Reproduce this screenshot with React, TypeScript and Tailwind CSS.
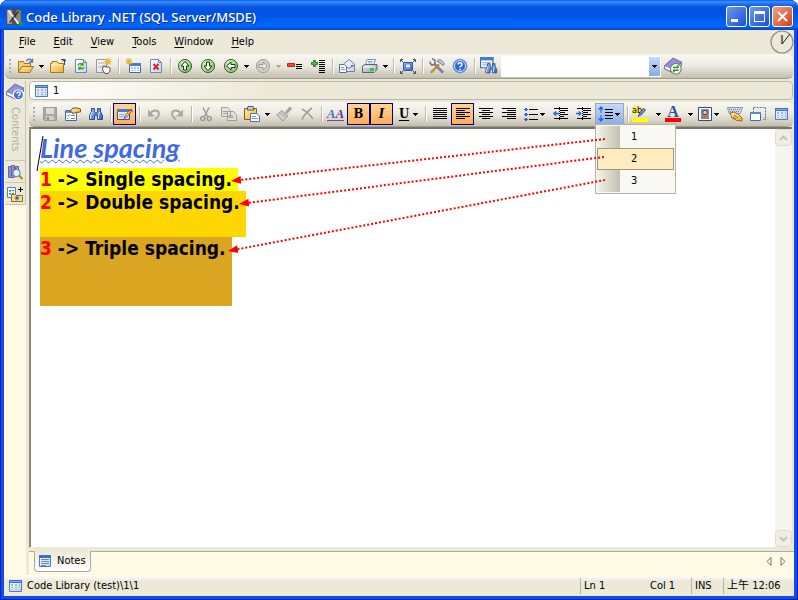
import type { ReactNode } from "react";
import { clsx } from "clsx";

const MENUS = ["File", "Edit", "View", "Tools", "Window", "Help"];

const Icon = ({ children, size = 16 }: { children: ReactNode; size?: number }) => (
  <svg width={size} height={size} viewBox="0 0 16 16" fill="none" className="shrink-0" aria-hidden="true">
    {children}
  </svg>
);

const Caret = ({ light = false }: { light?: boolean }) => (
  <svg width="5" height="3" viewBox="0 0 5 3" shapeRendering="crispEdges" className="shrink-0" aria-hidden="true">
    <path d="M0 0h5v1H0zM1 1h3v1H1zM2 2h1v1H2z" fill={light ? "#aca899" : "#000"} />
  </svg>
);

const Grip = () => (
  <div className="flex w-[9px] shrink-0 flex-col items-center justify-center gap-0.5 pl-px">
    {[0, 1, 2, 3].map((i) => (
      <span key={i} className="h-0.5 w-0.5 bg-[#b3b09e]" />
    ))}
  </div>
);

const Separator = () => (
  <div className="flex w-1.5 shrink-0 items-center pl-[3px]">
    <span className="h-4 w-0.5 border-r border-white bg-[#bdb9a5]" />
  </div>
);

const ToolButton = ({ label, active, children }: { label: string; active?: boolean; children: ReactNode }) => (
  <button
    aria-label={label}
    title={label}
    className={clsx(
      "flex h-[22px] w-[23px] shrink-0 items-center justify-center",
      active && "border border-[#000080] bg-linear-to-b from-[#ffd593] to-[#ffac56]"
    )}
  >
    {children}
  </button>
);

const DropArrow = ({ label, light }: { label: string; light?: boolean }) => (
  <button aria-label={label} className="flex h-[22px] w-[9px] shrink-0 items-center justify-center">
    <Caret light={light} />
  </button>
);

const DropButton = ({ label, wide, open, children }: { label: string; wide?: boolean; open?: boolean; children: ReactNode }) => (
  <button
    aria-label={label}
    title={label}
    className={clsx(
      "flex h-[22px] shrink-0 items-center",
      wide ? "w-8 gap-1.5 pl-0.5" : "w-[29px] gap-px pl-[3px]",
      open && "bg-linear-to-b from-[#c9dbf8] to-[#86ace6] outline -outline-offset-1 outline-[#9ba7b8]"
    )}
  >
    {children}
    <Caret />
  </button>
);

/* ---------- icons ---------- */

// gradients shared by the icons
const Gradients = () => (
  <svg width="0" height="0" className="absolute" aria-hidden="true">
    <defs>
      <linearGradient id="gold" x1="0" y1="0" x2="1" y2="1">
        <stop offset="0" stopColor="#fff0b4" />
        <stop offset="1" stopColor="#e9ae37" />
      </linearGradient>
      <linearGradient id="blue" x1="0" y1="0" x2="1" y2="1">
        <stop offset="0" stopColor="#9dc0f5" />
        <stop offset="1" stopColor="#2f5fb8" />
      </linearGradient>
      <linearGradient id="paper" x1="0" y1="0" x2="1" y2="1">
        <stop offset="0" stopColor="#ffffff" />
        <stop offset="1" stopColor="#bfd3f3" />
      </linearGradient>
      <linearGradient id="green" x1="0" y1="0" x2="1" y2="1">
        <stop offset="0" stopColor="#e4f6d8" />
        <stop offset="1" stopColor="#7ebd5c" />
      </linearGradient>
      <linearGradient id="steel" x1="0" y1="0" x2="1" y2="1">
        <stop offset="0" stopColor="#eef0f5" />
        <stop offset="1" stopColor="#8f97a8" />
      </linearGradient>
    </defs>
  </svg>
);

const Table = () => (
  <Icon>
    <path d="M2.500 2.500h12v11h-12z" fill="url(#paper)" stroke="#5479bd" />
    <path d="M2 2h13v3H2z" fill="#3f6fcb" />
    <path d="M3 3h11v1H3z" fill="#7da8f0" />
    <path d="M4 6h2v2H4zM8 6h2v2H8zM12 6h1v2h-1zM4 9h2v1H4zM8 9h2v1H8zM12 9h1v1h-1zM4 11h2v1H4zM8 11h2v1H8zM12 11h1v1h-1z" fill="#9cb9ea" />
  </Icon>
);

const Notes = () => (
  <Icon>
    <path d="M2.500 2.500h11v11h-11z" fill="url(#paper)" stroke="#5479bd" />
    <path d="M2 2h12v3H2z" fill="#3f6fcb" />
    <path d="M4 6.500h8M4 8.500h8M4 10.500h8M4 12.500h5" stroke="#6d87b8" />
  </Icon>
);

const OpenFolder = () => (
  <Icon>
    <path d="M.5 14.500v-11h5l1 2h6v3" fill="#f4d06c" stroke="#a07822" />
    <path d="M.5 14.500 4 8.500h11.500l-3.500 6z" fill="url(#gold)" stroke="#a07822" />
    <path d="M8.500 3.500c1-3 4-3 5.500-.5M14.500.5V4H11" stroke="#56749f" strokeWidth="1.300" />
  </Icon>
);

const UpFolder = () => (
  <Icon>
    <path d="M.5 14.500v-9h1.500v-2h5l1.500 2h5v9z" fill="url(#gold)" stroke="#a07822" />
    <path d="M1.500 7h11" stroke="#fff2bd" />
    <path d="M14.500 7V2M12.500 3.500l2-2.500 1.500 2.500M11 1.500h3" stroke="#35475f" />
  </Icon>
);

const Refresh = () => (
  <Icon>
    <path d="M2.500 1.500h8l3 3v10h-11z" fill="url(#paper)" stroke="#6f88ad" />
    <path d="M10.500 1.500v3h3" stroke="#6f88ad" />
    <path d="M5 7.500c.500-2 3-2.500 4.500-1M10 4.500v2.500H7.500M11 9c-.5 2-3 2.500-4.500 1M6 12V9.500h2.500" stroke="#3f9a16" strokeWidth="1.300" />
  </Icon>
);

const Spark = () => (
  <path d="M12 0v7M8.500 3.500h7M9.500 1l5 5M14.500 1l-5 5" stroke="#e9b823" strokeWidth="1.200" />
);

const NewPage = () => (
  <Icon>
    <path d="M.5 1.500h10v13H.5z" fill="url(#paper)" stroke="#8799b5" />
    <path d="M2 4h7v2H2zM2 8h5v2H2z" fill="#e6cda5" />
    <Spark />
    <path d="M7 10v-2h2v1h4l1 1v3l-2 2.500H9L6.500 12z" fill="#fff" stroke="#555" />
  </Icon>
);

const NewTable = () => (
  <Icon>
    <path d="M4.500 5.500h11v9h-11z" fill="#fff" stroke="#4668ad" />
    <path d="M4 5h12v3H4z" fill="#487ad0" />
    <path d="M6 9h2v2H6zM9 9h2v2H9zM12 9h2v2h-2zM6 12h2v1H6zM9 12h2v1H9zM12 12h2v1h-2z" fill="#aac3e8" />
    <path d="M4 0v7M.5 3.500h7M1.500 1l5 5M6.500 1l-5 5" stroke="#e9b823" strokeWidth="1.200" />
  </Icon>
);

const DeletePage = () => (
  <Icon>
    <path d="M2.500 1.500h8l3 3v10h-11z" fill="url(#paper)" stroke="#6f88ad" />
    <path d="M10.500 1.500v3h3" stroke="#6f88ad" />
    <path d="m5.500 6 5 5.500M10.500 6l-5 5.500" stroke="#df2318" strokeWidth="2" />
  </Icon>
);

const CircleArrow = ({ turn, grey }: { turn: 0 | 90 | 180 | 270; grey?: boolean }) => (
  <Icon>
    <circle cx="8" cy="8" r="6.500" fill={grey ? "#d4d2ca" : "url(#green)"} stroke={grey ? "#9b9b94" : "#27591d"} />
    <path
      d="M8 3.500 12 8H9.500v4h-3V8H4z"
      fill={grey ? "#e8e6de" : "#fff"}
      stroke={grey ? "#9b9b94" : "#1a3a13"}
      transform={`rotate(${turn} 8 8)`}
    />
  </Icon>
);

const Minus = () => (
  <Icon>
    <path d="M.5 5.500h7v3h-7z" fill="#ef4b2c" stroke="#b02c14" />
    <path d="M9 6.500h6M9 8.500h6M9 10.500h6" stroke="#000" shapeRendering="crispEdges" />
  </Icon>
);

const Plus = () => (
  <Icon>
    <path d="M3.500 2.500h2v2h2v2h-2v2h-2v-2h-2v-2h2z" fill="#64b154" stroke="#2c7a25" />
    <path d="M9 2.500h6M9 4.500h6M9 6.500h6M9 8.500h6M9 10.500h6M9 12.500h6M9 14.500h6" stroke="#000" shapeRendering="crispEdges" />
  </Icon>
);

const Mail = () => (
  <Icon>
    <path d="M4.500 6 10 1.500 15.500 6v7.500h-11z" fill="url(#paper)" stroke="#6983ad" />
    <path d="M5 7l5 3.500L15 7" stroke="#6983ad" />
    <path d="M12 7h2v2h-2z" fill="#e0522a" />
    <path d="M.5 6.500h5l2 2v6h-7z" fill="#fff" stroke="#597196" />
    <path d="M2 9.500h3M2 11.500h4" stroke="#7690ba" />
  </Icon>
);

const Printer = () => (
  <Icon>
    <path d="M5 1.500h8.500L11.500 7H3.500z" fill="#fff" stroke="#7c91b6" />
    <path d="M6 3.500h5M5.500 5h5" stroke="#92a7cc" />
    <path d="M.5 8 3 6.500h12v5l-3 3H.5z" fill="url(#steel)" stroke="#59647b" />
    <path d="M1 9h11v5" stroke="#eef2fa" />
    <path d="M8 10h4v3H8z" fill="#37c72a" />
  </Icon>
);

const FullScreen = () => (
  <Icon>
    <path d="M3.500 4.500h9v8h-9z" fill="url(#blue)" stroke="#2e5ba8" />
    <path d="M5.500 6h5v4h-5z" fill="#e4effd" stroke="#5582c8" />
    <path d="M.5 4V1.500H3M13 1.500h2.500V4M.5 13v2.500H3M13 15.500h2.500V13M1 2l2 2M15 2l-2 2M1 15l2-2M15 15l-2-2" stroke="#465468" />
  </Icon>
);

const Wrench = () => (
  <Icon>
    <path d="M5 5.500l9 9" stroke="#4b5260" strokeWidth="2.400" />
    <path d="M5 5.500l9 9" stroke="#c1c9d5" />
    <path d="M1 3.500c0 3 2 4 4.500 3M3 1c3 0 3.500 2 3 4" stroke="#6b7482" strokeWidth="1.500" />
    <path d="m2 14.500 8-8" stroke="#a06a1a" strokeWidth="2.200" />
    <path d="m2 14.500 8-8" stroke="#efb64a" />
    <path d="M8 3c2-2 4-1.500 5 0l2.500 3-1.500 1.500-3-2.500z" fill="#cbd2dc" stroke="#6b7482" />
  </Icon>
);

const Help = () => (
  <Icon>
    <circle cx="8" cy="8" r="6.800" fill="#2e68ce" stroke="#5c8fe2" />
    <circle cx="8" cy="8" r="5.500" stroke="#dce8fc" />
    <path d="M6 6.500c0-2.500 4-2.500 4 0C10 8 8 7.700 8 9.500M8 10.800v1.400" stroke="#fff" strokeWidth="1.500" />
  </Icon>
);

const Binoculars = () => (
  <>
    <path d="M3.500 2.500h3v3l1 1v1h1v-1l1-1v-3h3v3l2 4v4h-5v-4h-3v4h-5v-4l2-4z" fill="url(#blue)" stroke="#2a4c8f" />
    <path d="M4 6 2.500 10v3M11.500 6 10.500 10v3" stroke="#e2efff" />
  </>
);

const FindTable = () => (
  <Icon size={18}>
    <path d="M.5.5h11v9H.5z" fill="#f4f8ff" stroke="#4668ad" />
    <path d="M0 0h12v3H0z" fill="#487ad0" />
    <path d="M2 5h8M2 7h8" stroke="#9eb9e4" />
    <g transform="translate(4 4) scale(.75)">
      <Binoculars />
    </g>
  </Icon>
);

const Book = () => (
  <>
    <path d="M.5 8 8 1l7.500 3.500-6.500 7z" fill="#9a90d6" stroke="#7a6fbb" />
    <path d="M.5 8v2.500L9 14.500v-3M9 11.500 15.500 5v3" fill="#fff" stroke="#8277bb" />
  </>
);

const SyncBook = () => (
  <Icon size={18}>
    <Book />
    <circle cx="10.500" cy="10.500" r="4.800" fill="#f3faec" stroke="#6d836d" />
    <path d="M8 9.300h5M11.500 7.500l1.500 1.800M13 11.800H8M9.500 13.500 8 11.800" stroke="#44911f" strokeWidth="1.300" />
  </Icon>
);

const HelpBook = () => (
  <Icon size={18}>
    <Book />
    <circle cx="11" cy="10.500" r="4.500" fill="#4375d2" stroke="#fff" />
    <path d="M9.700 9.500c0-2 3-2 3 0 0 1.200-1.500 1-1.500 2M11.200 12.200v1" stroke="#fff" strokeWidth="1.200" />
  </Icon>
);

const SearchBooks = () => (
  <Icon>
    <path d="M1.500 2.500h3v11h-3zM4.500 1.500h3v12h-3z" fill="#9a90cf" stroke="#6a60a5" />
    <path d="M8.500 2.500h3v5h-3z" fill="#7fa6da" stroke="#4b6ca5" />
    <path d="M12 11.500l3.500 3.500" stroke="#bd8519" strokeWidth="2" />
    <circle cx="9.500" cy="9" r="3.700" fill="#e2f3ff" stroke="#5b6f91" />
  </Icon>
);

const AddFavourite = () => (
  <Icon>
    <path d="M.5 1.500h8v10h-8z" fill="#f3f8ff" stroke="#5e7eae" />
    <path d="M2 4h2v1.500H2zM2 7h2v1.500H2z" fill="#409936" />
    <path d="M5 4.500h2M5 7.500h2" stroke="#6075a0" />
    <path d="M11 3.500h5M13.500 1v5" stroke="#000" />
    <path d="M4.500 8.500h4l1 1h6v6h-11z" fill="#fbe18c" stroke="#8c7025" />
    <path d="M10 9.500v5M7.500 12h5M8.500 10.500l3 3M11.500 10.500l-3 3" stroke="#274e9a" strokeWidth=".8" />
  </Icon>
);

const Save = () => (
  <Icon>
    <path d="M1.500 1.500h13v13h-12l-1-1z" fill="#a9a9a4" stroke="#9a9a94" />
    <path d="M4 2h8v6H4z" fill="#dddcd6" />
    <path d="M4 10h8v4H4z" fill="#cfcec8" />
    <path d="M5 11h2v3H5z" fill="#8d8d88" />
  </Icon>
);

const Properties = () => (
  <Icon>
    <path d="M.5 4.500h11v10H.5z" fill="#fff" stroke="#4668ad" />
    <path d="M1 5h10v2H1z" fill="#6d98df" />
    <path d="M2 9.500l1 1 1.500-2M6 9.500h4M2 12.500h1.500M6 12.500h4" stroke="#6680ae" />
    <path d="M4.500 5.500 8 2h4l3.500 1v3l-5 .5L8 8 7 6z" fill="url(#gold)" stroke="#79571c" />
  </Icon>
);

const EditPencil = () => (
  <Icon>
    <path d="M.5 3.500h12v10H.5z" fill="url(#paper)" stroke="#35599c" />
    <path d="M0 3h13v3H0z" fill="#477bd1" />
    <path d="M2 8.500h5M2 10.500h4" stroke="#8ea8d3" />
    <path d="M7 12.500 8 9.500l6-6.500 1.500 1.500-6 6.500z" fill="#f5cb68" stroke="#644a21" strokeWidth=".8" />
    <path d="m13 3.500 2 2" stroke="#c84732" strokeWidth="1.500" />
  </Icon>
);

const Undo = ({ flip }: { flip?: boolean }) => (
  <Icon>
    <g transform={flip ? "translate(16 0) scale(-1 1)" : undefined}>
      <path d="M4 7.500c3-4 9-4 9 .5 0 2.500-2 3.500-4 5.500" stroke="#aaa9a1" strokeWidth="2" />
      <path d="M2 3.500v7h7z" fill="#aaa9a1" />
    </g>
  </Icon>
);

const Cut = () => (
  <Icon>
    <path d="M5 1.500l4.500 9M11 1.500l-4.500 9" stroke="#9b9b96" strokeWidth="1.500" />
    <circle cx="4.800" cy="12.500" r="2" stroke="#9b9b96" strokeWidth="1.500" />
    <circle cx="11.200" cy="12.500" r="2" stroke="#9b9b96" strokeWidth="1.500" />
  </Icon>
);

const Copy = () => (
  <Icon>
    <path d="M.5 1.500h6l3 3v6h-9zM6.500 5.500h6l3 3v6h-9z" fill="#e2e0d7" stroke="#a2a199" />
    <path d="M2 5.500h4M2 7.500h4M8 9.500h4M8 11.500h5" stroke="#a2a199" />
  </Icon>
);

const Paste = () => (
  <Icon>
    <path d="M.5 2.500h12v11H.5z" fill="url(#gold)" stroke="#8c5e12" />
    <path d="M4 .5h5l1 3.500H3z" fill="#cdd2db" stroke="#53565e" />
    <path d="M6.500 7.500h6l3 2.500v5.500h-9z" fill="#fff" stroke="#5271a4" />
    <path d="M8 10.500h4M8 12.500h6" stroke="#7f9bcb" />
  </Icon>
);

const Brush = () => (
  <Icon>
    <path d="M15 1.500 10 7" stroke="#a3a29b" strokeWidth="3" />
    <path d="M6 4.500 12 10l-5 5-6.500-6z" fill="#c3c1b8" stroke="#a3a29b" />
    <path d="m3 8.500 5 4.500" stroke="#efede6" />
  </Icon>
);

const Cross = () => (
  <Icon>
    <path d="M3 3c4 2 8 6 11 10M13 2C9 5 5 9 3 13.500" stroke="#a19f96" strokeWidth="1.600" />
  </Icon>
);

const Glyphs = () => (
  <span className="flex items-baseline border-b border-[#7b3fb5] font-['Liberation_Serif',serif] text-[13px] leading-[13px] font-bold italic">
    <span className="text-[#3e71ca]">A</span>
    <span className="text-[#6833a4]">A</span>
  </span>
);

const Lines = ({ kind }: { kind: "justify" | "left" | "center" | "right" }) => {
  const d = {
    justify: "M1 2.500h14M1 4.500h14M1 6.500h14M1 8.500h14M1 10.500h14M1 12.500h14",
    left: "M1 2.500h14M1 4.500h9M1 6.500h14M1 8.500h9M1 10.500h14M1 12.500h9",
    center: "M1 2.500h14M4 4.500h8M1 6.500h14M4 8.500h8M1 10.500h14M4 12.500h8",
    right: "M1 2.500h14M6 4.500h9M1 6.500h14M6 8.500h9M1 10.500h14M6 12.500h9",
  }[kind];
  return (
    <Icon>
      <path d={d} stroke="#000" shapeRendering="crispEdges" />
    </Icon>
  );
};

const Bullets = () => (
  <Icon>
    <path d="M6 3.500h9M6 8.500h9M6 13.500h9" stroke="#000" shapeRendering="crispEdges" />
    <path d="M2 2h2v3H2zM2 7h2v3H2zM2 12h2v3H2zM1 3h4v1H1zM1 8h4v1H1zM1 13h4v1H1z" fill="#3f66bd" />
  </Icon>
);

const Indent = ({ out }: { out?: boolean }) => (
  <Icon>
    <path d="M1 2.500h14M7 4.500h8M7 6.500h5M7 8.500h8M7 10.500h4M1 12.500h14" stroke="#000" shapeRendering="crispEdges" />
    <path d="M6.500 1v14" stroke="#000" strokeDasharray="1 1" />
    <path d={out ? "M0 7.500 3 5v2h3v1H3v2z" : "M5.500 7.500 3 5v2H0v1h3v2z"} fill="#2966d4" stroke="#2966d4" strokeWidth=".5" />
  </Icon>
);

const Spacing = () => (
  <Icon>
    <path d="M7 3.500h8M7 6.500h8M7 9.500h8M7 12.500h8" stroke="#000" shapeRendering="crispEdges" />
    <path d="M3 0 6 3.500H3.500V7h-1V3.500H0zM3 16l3-3.500H3.500V9h-1v3.500H0z" fill="#2563d0" />
  </Icon>
);

const Highlight = () => (
  <span className="flex w-[18px] flex-col">
    <span className="flex h-3 items-start">
      <span className="bg-[#fff36b] font-['DejaVu_Sans_Condensed',sans-serif] text-[9px] leading-[9px] text-black">ab</span>
      <svg width="8" height="12" viewBox="0 0 9 12" className="-ml-1 shrink-0" aria-hidden="true">
        <path d="M0 11 2 7l4-5 2.500 1.500L4 9z" fill="url(#blue)" stroke="#365488" />
      </svg>
    </span>
    <span className="h-1 w-4 bg-[#ffff00]" />
  </span>
);

const FontColour = () => (
  <span className="flex w-[18px] flex-col items-center">
    <span className="font-['Liberation_Serif',serif] text-[16px] leading-3 font-bold text-[#2e53a4]">A</span>
    <span className="h-1 w-4 bg-[#ff0000]" />
  </span>
);

const Portrait = () => (
  <Icon>
    <path d="M1.500 1.500h13v13h-13z" fill="#fff" stroke="#2c4c8b" />
    <path d="M4 3h8v10H4z" fill="#7692c1" />
    <circle cx="8" cy="6.500" r="2.300" fill="#f2c29c" stroke="#603d25" />
    <path d="M4 13c0-4 8-4 8 0z" fill="#d36a36" />
  </Icon>
);

const Keyboard = () => (
  <Icon>
    <path d="M.5 1.500h15l-2 6H2z" fill="#d5dbe7" stroke="#8d98ae" />
    <path d="M2 3.500h12M3 5.500h10" stroke="#6c7a94" strokeDasharray="1 1" />
    <path d="M3 7l4-1 4 2 4 4v3l-5-.5L5 12z" fill="url(#gold)" stroke="#956925" />
    <path d="M7 9l4 3M6 11l3 2" stroke="#956925" />
  </Icon>
);

const SelectArea = () => (
  <Icon>
    <path d="M3.500 1.500h12v12h-3" stroke="#5779b6" strokeDasharray="2 1" />
    <path d="M3.500 2v4" stroke="#5779b6" strokeDasharray="2 1" />
    <path d="M.5 6.500h10v8H.5z" fill="#fff" stroke="#4668ad" />
    <path d="M0 6h11v2H0z" fill="#5b8bda" />
  </Icon>
);

/* ---------- window parts ---------- */

const AppLogo = () => (
  <Icon size={18}>
    <path d="M1 1h14v14H1z" fill="#4f504e" />
    <path d="M2 2h4v12H2z" fill="#b4b6b2" />
    <path d="M10 2h4v12h-4z" fill="#868883" />
    <path d="m3 2 9 12" stroke="#eceeea" strokeWidth="1.800" />
    <path d="M12 3 4 13" stroke="#2a2b29" strokeWidth="1.200" />
    <circle cx="14" cy="14" r="1.800" fill="#14a521" />
  </Icon>
);

const TitleBar = () => (
  <header className="flex h-[30px] shrink-0 items-center bg-[linear-gradient(#0058ee_0%,#3f92ff_6%,#2474ef_12%,#0352dd_25%,#0054e2_50%,#0062f8_75%,#0066ff_88%,#0046c8_100%)] px-[5px] pt-[3px]">
    <AppLogo />
    <h1 className="ml-[3px] flex-1 font-['Noto_Sans','Open_Sans',sans-serif] text-[13px] font-medium text-white [text-shadow:1px_1px_#0b2f8f]">
      Code Library .NET (SQL Server/MSDE)
    </h1>
    <div className="flex gap-0.5">
      <button aria-label="Minimize" className="flex h-[21px] w-[21px] items-center justify-center rounded-[3px] border border-white bg-linear-to-br from-[#6d96ee] to-[#1b4fd0]">
        <svg width="13" height="13" aria-hidden="true"><path d="M1 9h7v3H1z" fill="#fff" /></svg>
      </button>
      <button aria-label="Maximize" className="flex h-[21px] w-[21px] items-center justify-center rounded-[3px] border border-white bg-linear-to-br from-[#6d96ee] to-[#1b4fd0]">
        <svg width="13" height="13" aria-hidden="true"><path d="M1 1h11v11H1zM2 4v7h9V4z" fill="#fff" fillRule="evenodd" /></svg>
      </button>
      <button aria-label="Close" className="flex h-[21px] w-[21px] items-center justify-center rounded-[3px] border border-white bg-linear-to-br from-[#f0a084] to-[#d03a10]">
        <svg width="13" height="13" aria-hidden="true"><path d="m2 2 9 9M11 2l-9 9" stroke="#fff" strokeWidth="2" /></svg>
      </button>
    </div>
  </header>
);

const MenuBar = () => (
  <nav className="flex h-6 shrink-0 items-center pl-[9px]">
    {MENUS.map((name) => (
      <button key={name} className="mr-1.5 h-5 px-1.5">
        <span className="underline underline-offset-2">{name[0]}</span>
        {name.slice(1)}
      </button>
    ))}
    <svg width="24" height="24" viewBox="0 0 24 24" fill="none" className="ml-auto shrink-0" aria-hidden="true">
      <circle cx="12" cy="12" r="11" stroke="#8f8e86" strokeWidth="1.200" />
      <path d="M12 14V5" stroke="#77766f" strokeWidth="2.200" />
      <path d="m12 14 8-10" stroke="#222" />
    </svg>
  </nav>
);

const BAR = "flex shrink-0 items-center rounded-md bg-linear-to-b from-[#f8f7f2] via-[#ebe9df] to-[#c3c0b0] border-b border-[#a09d8c]";

const MainToolbar = () => (
  <div role="toolbar" aria-label="Main" className={clsx(BAR, "mx-px h-[25px]")}>
    <Grip />
    <ToolButton label="Open"><OpenFolder /></ToolButton>
    <DropArrow label="Open options" />
    <ToolButton label="Parent folder"><UpFolder /></ToolButton>
    <ToolButton label="Refresh"><Refresh /></ToolButton>
    <ToolButton label="New page"><NewPage /></ToolButton>
    <Separator />
    <ToolButton label="New table"><NewTable /></ToolButton>
    <ToolButton label="Delete"><DeletePage /></ToolButton>
    <Separator />
    <ToolButton label="Up"><CircleArrow turn={0} /></ToolButton>
    <ToolButton label="Down"><CircleArrow turn={180} /></ToolButton>
    <ToolButton label="Back"><CircleArrow turn={270} /></ToolButton>
    <DropArrow label="Back history" />
    <ToolButton label="Forward"><CircleArrow turn={90} grey /></ToolButton>
    <DropArrow label="Forward history" light />
    <ToolButton label="Collapse"><Minus /></ToolButton>
    <ToolButton label="Expand"><Plus /></ToolButton>
    <Separator />
    <ToolButton label="Send"><Mail /></ToolButton>
    <ToolButton label="Print"><Printer /></ToolButton>
    <DropArrow label="Print options" />
    <Separator />
    <ToolButton label="Full screen"><FullScreen /></ToolButton>
    <Separator />
    <ToolButton label="Options"><Wrench /></ToolButton>
    <ToolButton label="Help topics"><Help /></ToolButton>
    <Separator />
    <ToolButton label="Find in library"><FindTable /></ToolButton>
    <div className="ml-px grid w-40 shrink-0 grid-cols-[1fr_11px] bg-white p-px">
      <select aria-label="Search text" className="col-span-2 col-start-1 row-start-1 h-[19px] appearance-none bg-transparent" />
      <span className="pointer-events-none col-start-2 row-start-1 flex items-center justify-center bg-linear-to-b from-[#c9dbf8] to-[#86ace6]">
        <Caret />
      </span>
    </div>
    <ToolButton label="Sync contents"><SyncBook /></ToolButton>
  </div>
);

const SpacingMenu = () => (
  <div className="relative shrink-0">
    <DropButton label="Line spacing" open><Spacing /></DropButton>
    <ul role="menu" className="absolute top-[21px] left-0 z-10 w-[81px] border border-[#b5b2a2] bg-[#f9f8f2] p-px">
      {["1", "2", "3"].map((n) => (
        <li key={n} role="none" className="flex h-[22px]">
          <button
            role="menuitem"
            className={clsx(
              "flex w-full items-center",
              n === "2" ? "border border-[#9c9786] bg-[#ffecbf] pl-[33px]" : "bg-[linear-gradient(to_right,#f4f2e9,#c4c0b0_23px,#f9f8f2_23px)] pl-[34px]"
            )}
          >
            {n}
          </button>
        </li>
      ))}
    </ul>
  </div>
);

const SERIF = "font-['DejaVu_Serif_Condensed','DejaVu_Serif',serif] text-[13px] leading-4 font-bold text-black w-4 text-center";

const FormatToolbar = () => (
  <div role="toolbar" aria-label="Formatting" className={clsx(BAR, "h-[25px]")}>
    <Grip />
    <ToolButton label="Save"><Save /></ToolButton>
    <ToolButton label="Properties"><Properties /></ToolButton>
    <ToolButton label="Find"><Icon><Binoculars /></Icon></ToolButton>
    <Separator />
    <ToolButton label="Edit" active><EditPencil /></ToolButton>
    <Separator />
    <ToolButton label="Undo"><Undo /></ToolButton>
    <ToolButton label="Redo"><Undo flip /></ToolButton>
    <Separator />
    <ToolButton label="Cut"><Cut /></ToolButton>
    <ToolButton label="Copy"><Copy /></ToolButton>
    <ToolButton label="Paste"><Paste /></ToolButton>
    <DropArrow label="Paste options" />
    <ToolButton label="Format painter"><Brush /></ToolButton>
    <ToolButton label="Remove"><Cross /></ToolButton>
    <Separator />
    <ToolButton label="Font"><Glyphs /></ToolButton>
    <ToolButton label="Bold" active><span className={SERIF}>B</span></ToolButton>
    <ToolButton label="Italic" active><span className={clsx(SERIF, "italic")}>I</span></ToolButton>
    <DropButton label="Underline"><span className={clsx(SERIF, "underline underline-offset-2")}>U</span></DropButton>
    <Separator />
    <ToolButton label="Justify"><Lines kind="justify" /></ToolButton>
    <ToolButton label="Align left" active><Lines kind="left" /></ToolButton>
    <ToolButton label="Center"><Lines kind="center" /></ToolButton>
    <ToolButton label="Align right"><Lines kind="right" /></ToolButton>
    <DropButton label="Bullets"><Bullets /></DropButton>
    <ToolButton label="Outdent"><Indent out /></ToolButton>
    <ToolButton label="Indent"><Indent /></ToolButton>
    <SpacingMenu />
    <Separator />
    <DropButton label="Highlight" wide><Highlight /></DropButton>
    <DropButton label="Font colour" wide><FontColour /></DropButton>
    <DropButton label="Picture"><Portrait /></DropButton>
    <ToolButton label="Keyboard"><Keyboard /></ToolButton>
    <ToolButton label="Select area"><SelectArea /></ToolButton>
    <ToolButton label="Table"><Table /></ToolButton>
  </div>
);

const Sidebar = () => (
  <aside className="flex w-[22px] shrink-0 flex-col bg-[#fefae4] pl-px">
    <div className="flex flex-col border-r border-[#c9c6b4] bg-[#ece9d8]">
      <button className="flex h-20 flex-col items-center gap-1.5 border-b border-[#c9c6b4] pt-0.5">
        <HelpBook />
        <span className="text-[#b0ad9e] [writing-mode:vertical-rl]">Contents</span>
      </button>
      <button aria-label="Search" className="flex h-[22px] items-center justify-center border-b border-[#c9c6b4]">
        <SearchBooks />
      </button>
      <button aria-label="Favourites" className="flex h-[22px] items-center justify-center border-b border-[#c9c6b4]">
        <AddFavourite />
      </button>
    </div>
  </aside>
);

const ScrollBar = () => (
  <div className="flex w-[17px] shrink-0 flex-col justify-between bg-[#f6f5ef]">
    <button aria-label="Scroll up" disabled className="flex h-[17px] items-center justify-center rounded-sm border border-[#dfdccd] bg-[#f0eee4]">
      <svg width="9" height="6" fill="none" aria-hidden="true"><path d="m1 5 3.500-3.500L8 5" stroke="#c6c4b7" strokeWidth="2" /></svg>
    </button>
    <button aria-label="Scroll down" disabled className="flex h-[17px] items-center justify-center rounded-sm border border-[#dfdccd] bg-[#f0eee4]">
      <svg width="9" height="6" fill="none" aria-hidden="true"><path d="m1 1 3.500 3.500L8 1" stroke="#c6c4b7" strokeWidth="2" /></svg>
    </button>
  </div>
);

const ARROWS = [
  { from: [574, 10], to: [200, 52] },
  { from: [573, 28], to: [208, 75] },
  { from: [574, 51], to: [197, 122] },
];

const Arrows = () => (
  <svg width="600" height="140" fill="none" className="pointer-events-none absolute top-0 left-0 z-20" aria-hidden="true">
    <defs>
      <marker id="tip" markerUnits="userSpaceOnUse" markerWidth="10" markerHeight="8" refX="0" refY="4" orient="auto-start-reverse">
        <path d="M0 0 10 4 0 8z" fill="#f00" />
      </marker>
    </defs>
    {ARROWS.map(({ from, to }) => {
      const dx = to[0] - from[0];
      const dy = to[1] - from[1];
      const len = Math.hypot(dx, dy);
      return (
        <line
          key={from[1]}
          x1={from[0]}
          y1={from[1]}
          x2={to[0] - (dx / len) * 10}
          y2={to[1] - (dy / len) * 10}
          stroke="#f00"
          strokeWidth="2"
          strokeDasharray="2 2"
          markerEnd="url(#tip)"
        />
      );
    })}
  </svg>
);

const LINES = [
  { n: "1", text: "Single", box: "h-[23px] bg-[#ffff00]" },
  { n: "2", text: "Double", box: "h-[46px] bg-[#ffd700]" },
  { n: "3", text: "Triple", box: "h-[69px] bg-[#daa520]" },
];

const Editor = () => (
  <div className="relative mr-0.5 flex min-h-0 flex-1 border-t-2 border-l-2 border-t-[#77756a] border-l-[#8c897b] bg-white">
    <article className="flex-1 pt-[7px] pl-[9px]">
      <div className="relative h-8">
        <svg width="8" height="38" className="absolute -top-px -left-1" aria-hidden="true">
          <path d="M1 36 7 1" stroke="#000" strokeWidth="1" />
        </svg>
        <h2 className="w-fit font-[Lato,sans-serif] text-[27px] leading-[24px] font-bold text-[#4169e1] italic underline decoration-wavy decoration-1 underline-offset-1">
          Line spacing
        </h2>
      </div>
      {LINES.map((line) => (
        <p
          key={line.n}
          className={clsx("w-fit pr-1.5 font-['DejaVu_Sans_Condensed',sans-serif] text-[19px] leading-[23px] font-bold text-black", line.box)}
        >
          <span className="text-[#ff0000]">{line.n}</span> -&gt; {line.text} spacing.
        </p>
      ))}
    </article>
    <ScrollBar />
    <Arrows />
  </div>
);

const TabStrip = () => (
  <div className="flex h-7 shrink-0 items-start justify-between border-t-4 border-[#ece9d8] bg-[#fefae4] pr-2 pl-[5px] shadow-[inset_0_1px_#b0ad9c]">
    <button className="flex h-[21px] items-center gap-1 rounded-b-sm border border-t-0 border-[#aca899] bg-linear-to-b from-[#ece9d8] to-white pr-1 pl-0.5">
      <Notes />
      Notes
    </button>
    <div className="flex h-[21px] items-center gap-2">
      <button aria-label="Previous tab">
        <svg width="6" height="9" fill="none" aria-hidden="true"><path d="M5 .5v8L1 4.500z" stroke="#77756a" /></svg>
      </button>
      <button aria-label="Next tab">
        <svg width="6" height="9" fill="none" aria-hidden="true"><path d="M1 .5v8l4-4z" stroke="#77756a" /></svg>
      </button>
    </div>
  </div>
);

const StatusBar = () => (
  <footer className="flex h-[21px] shrink-0 items-center bg-linear-to-b from-white via-[#ece9d8] via-30% to-[#ece9d8] pl-[3px]">
    <Table />
    <span className="ml-1 flex-1">Code Library (test)\1\1</span>
    <span className="w-[66px] border-l border-[#b5b2a0] pl-[3px]">Ln 1</span>
    <span className="w-[45px] pl-1">Col 1</span>
    <span className="w-8 border-l border-[#b5b2a0] pl-[3px]">INS</span>
    <span className="w-[71px] border-l border-[#b5b2a0] pl-[3px] whitespace-nowrap">上午 12:06</span>
  </footer>
);

const App = () => (
  <div className="flex h-screen min-h-[400px] w-full flex-col overflow-hidden rounded-t-lg bg-[#0b50e2] pb-1 font-['DejaVu_Sans_Condensed','Noto_Sans_CJK_TC',sans-serif] text-[11px] leading-4 text-black shadow-[inset_0_0_0_1px_#0019cf]">
    <Gradients />
    <TitleBar />
    <div className="mx-1 flex min-h-0 flex-1 flex-col bg-[#ece9d8]">
      <MenuBar />
      <MainToolbar />
      <div className="mt-0.5 flex min-h-0 flex-1">
        <Sidebar />
        <main className="ml-[3px] flex min-w-0 flex-1 flex-col">
          <div className="mr-px flex h-[19px] shrink-0 items-center gap-1 rounded-sm border border-[#bbb8a8] bg-[linear-gradient(to_right,#fff,#ece9d8_240px)] pl-[3px]">
            <Table />
            <span>1</span>
          </div>
          <div className="mt-0.5 mr-px flex shrink-0 flex-col">
            <FormatToolbar />
          </div>
          <Editor />
          <TabStrip />
        </main>
      </div>
      <StatusBar />
    </div>
  </div>
);

export default App;
